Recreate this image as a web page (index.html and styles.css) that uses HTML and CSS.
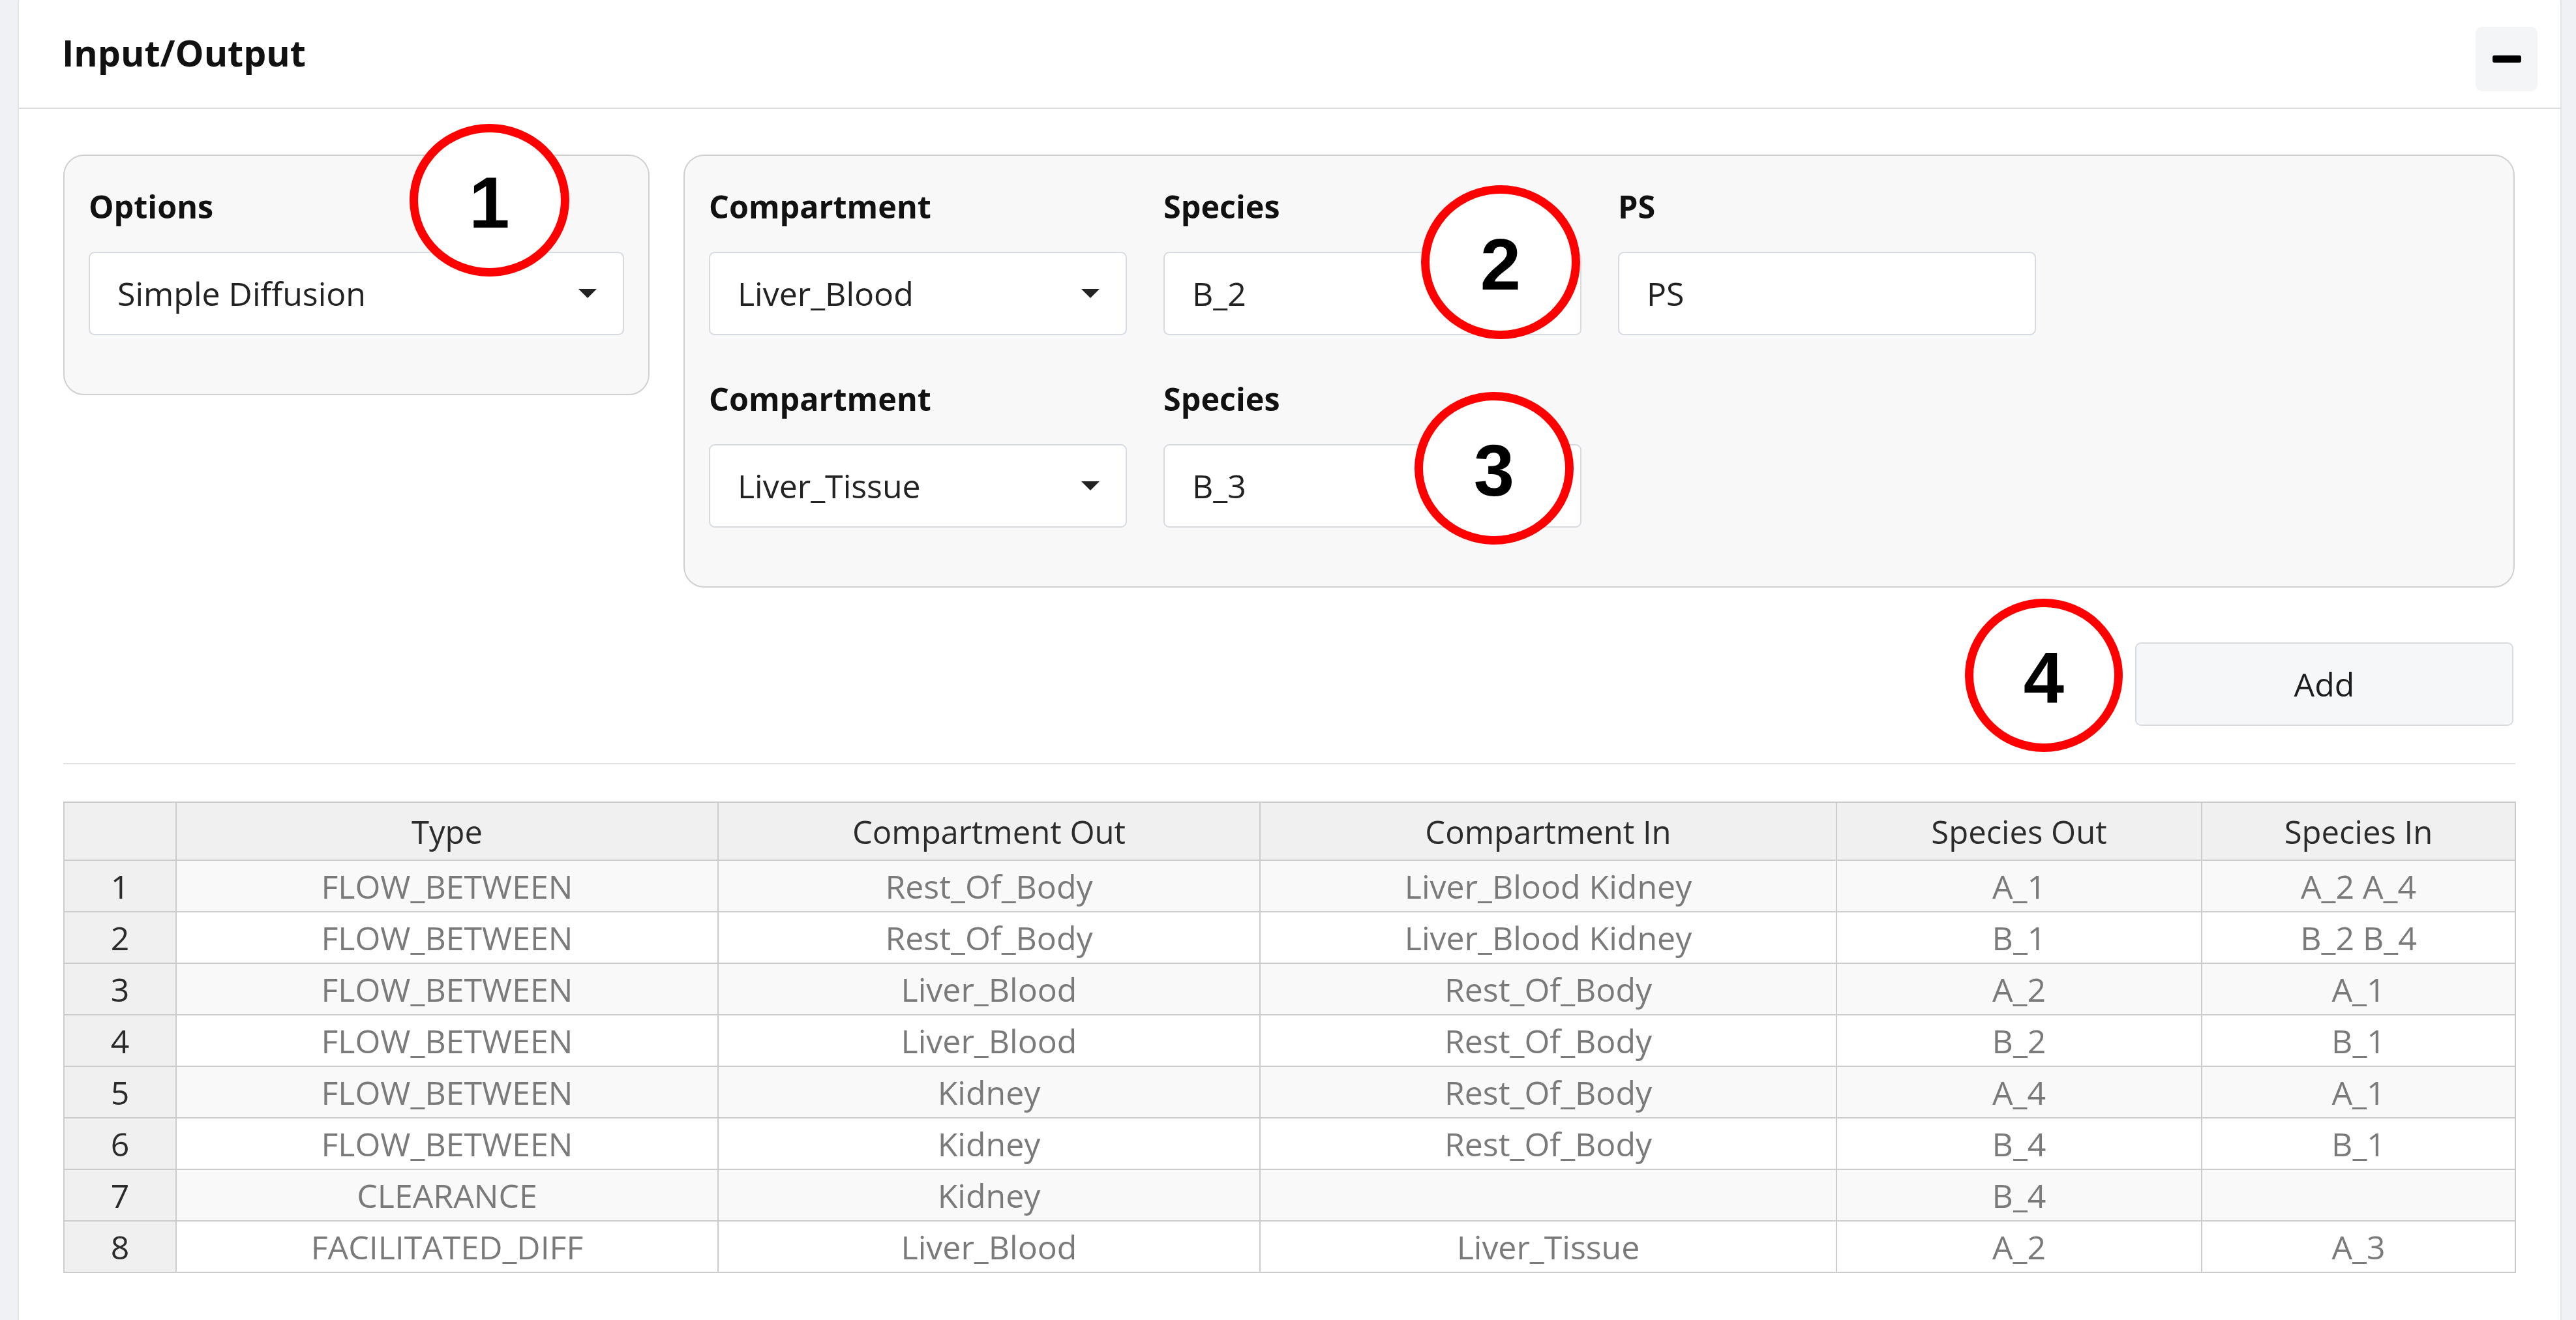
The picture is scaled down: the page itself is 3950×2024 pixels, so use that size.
FILE: index.html
```html
<!DOCTYPE html>
<html lang="en">
<head>
<meta charset="utf-8">
<title>Input/Output</title>
<link rel="stylesheet" href="styles.css">
</head>
<body>
<div class="page">
  <section class="card">
    <header class="card-header">
      <h2 class="card-title">Input/Output</h2>
      <button class="collapse-btn" type="button" aria-label="Collapse"><span class="minus"></span></button>
    </header>
    <div class="card-body">
      <div class="form-row">
        <div class="well well-options">
          <div class="group">
            <label class="label">Options</label>
            <div class="select"><span>Simple Diffusion</span><i class="caret"></i></div>
          </div>
        </div>
        <div class="well well-fields">
          <div class="fields-row">
            <div class="group field">
              <label class="label">Compartment</label>
              <div class="select"><span>Liver_Blood</span><i class="caret"></i></div>
            </div>
            <div class="group field">
              <label class="label">Species</label>
              <div class="input">B_2</div>
            </div>
            <div class="group field">
              <label class="label">PS</label>
              <div class="input">PS</div>
            </div>
          </div>
          <div class="fields-row">
            <div class="group field">
              <label class="label">Compartment</label>
              <div class="select"><span>Liver_Tissue</span><i class="caret"></i></div>
            </div>
            <div class="group field">
              <label class="label">Species</label>
              <div class="input">B_3</div>
            </div>
          </div>
        </div>
      </div>

      <div class="actions">
        <button class="btn-add" type="button">Add</button>
      </div>

      <hr class="divider">

      <table class="grid">
        <thead>
          <tr>
            <th class="idx"></th>
            <th class="c-type">Type</th>
            <th class="c-cout">Compartment Out</th>
            <th class="c-cin">Compartment In</th>
            <th class="c-sout">Species Out</th>
            <th class="c-sin">Species In</th>
          </tr>
        </thead>
        <tbody>
          <tr><th class="idx">1</th><td>FLOW_BETWEEN</td><td>Rest_Of_Body</td><td>Liver_Blood Kidney</td><td>A_1</td><td>A_2 A_4</td></tr>
          <tr><th class="idx">2</th><td>FLOW_BETWEEN</td><td>Rest_Of_Body</td><td>Liver_Blood Kidney</td><td>B_1</td><td>B_2 B_4</td></tr>
          <tr><th class="idx">3</th><td>FLOW_BETWEEN</td><td>Liver_Blood</td><td>Rest_Of_Body</td><td>A_2</td><td>A_1</td></tr>
          <tr><th class="idx">4</th><td>FLOW_BETWEEN</td><td>Liver_Blood</td><td>Rest_Of_Body</td><td>B_2</td><td>B_1</td></tr>
          <tr><th class="idx">5</th><td>FLOW_BETWEEN</td><td>Kidney</td><td>Rest_Of_Body</td><td>A_4</td><td>A_1</td></tr>
          <tr><th class="idx">6</th><td>FLOW_BETWEEN</td><td>Kidney</td><td>Rest_Of_Body</td><td>B_4</td><td>B_1</td></tr>
          <tr><th class="idx">7</th><td>CLEARANCE</td><td>Kidney</td><td></td><td>B_4</td><td></td></tr>
          <tr><th class="idx">8</th><td>FACILITATED_DIFF</td><td>Liver_Blood</td><td>Liver_Tissue</td><td>A_2</td><td>A_3</td></tr>
        </tbody>
      </table>
    </div>
  </section>

  <div class="annot a1">1</div>
  <div class="annot a2">2</div>
  <div class="annot a3">3</div>
  <div class="annot a4">4</div>
</div>
</body>
</html>
```

FILE: styles.css
```css
html, body {
  margin: 0;
  padding: 0;
  height: 2024px;
  overflow: hidden;
  background: #eff1f5;
}

.page {
  position: relative;
  height: 2024px;
  font-family: "Open Sans", "Noto Sans", "Liberation Sans", sans-serif;
  color: #1d1d1d;
}

.card {
  box-sizing: border-box;
  margin-left: 27px;
  margin-top: -12px;
  width: 3901px;
  height: 2200px;
  background: #ffffff;
  border: 2px solid #e0e3e7;
  border-radius: 16px;
}

.card-header {
  box-sizing: content-box;
  display: flex;
  justify-content: space-between;
  align-items: flex-start;
  height: 175px;
  padding: 0 35px 0 66px;
  border-bottom: 2px solid #dedede;
}

.card-title {
  margin: 56px 0 0 0;
  font-size: 55.5px;
  line-height: 70px;
  font-weight: 700;
  color: #111;
}

.collapse-btn {
  margin-top: 51px;
  width: 95px;
  height: 99px;
  border: 0;
  border-radius: 10px;
  background: #f4f5f7;
  display: flex;
  align-items: center;
  justify-content: center;
  padding: 0;
}

.minus {
  display: block;
  width: 44px;
  height: 11px;
  border-radius: 3px;
  background: #000;
}

.card-body {
  padding: 70px 69px 0 68px;
}

.form-row {
  display: flex;
  align-items: flex-start;
  gap: 52px;
}

.well {
  box-sizing: border-box;
  background: #f8f8f8;
  border: 2px solid #d0d0d0;
  border-radius: 32px;
  padding: 47px 37px 23px 37px;
}

.well-options {
  width: 899px;
}

.well-fields {
  width: 2808px;
}

.fields-row {
  display: flex;
  gap: 56px;
}

.field {
  width: 641px;
}

.group {
  margin-bottom: 67px;
}

.label {
  display: block;
  font-size: 48.5px;
  line-height: 60px;
  font-weight: 700;
  color: #111;
  margin-bottom: 40px;
}

.select,
.input {
  box-sizing: border-box;
  height: 128px;
  background: #ffffff;
  border: 2px solid #d6dbe2;
  border-radius: 9px;
  display: flex;
  align-items: center;
  justify-content: space-between;
  padding: 0 40px 0 42px;
  font-size: 50px;
  color: #222;
}

.caret {
  display: block;
  width: 0;
  height: 0;
  border-left: 14px solid transparent;
  border-right: 14px solid transparent;
  border-top: 14px solid #222;
}

.actions {
  display: flex;
  justify-content: flex-end;
  margin-top: 84px;
  padding-right: 3px;
}

.btn-add {
  box-sizing: border-box;
  width: 580px;
  height: 128px;
  background: #f6f7f9;
  border: 2px solid #d6dbe2;
  border-radius: 9px;
  font-family: "Open Sans", "Noto Sans", sans-serif;
  font-size: 50px;
  color: #1d1d1d;
}

.divider {
  border: 0;
  border-top: 2px solid #e3e3e3;
  margin: 57px 0 0 0;
}

.grid {
  margin-top: 57px;
  width: 3759px;
  border-collapse: collapse;
  table-layout: fixed;
  font-size: 50px;
}

.grid th,
.grid td {
  border: 2px solid #cccccc;
  text-align: center;
  padding: 0;
  white-space: nowrap;
  overflow: hidden;
}

.grid thead th {
  height: 87px;
  background: #f0f0f0;
  font-weight: 400;
  font-size: 49px;
  color: #2b2b2b;
}

.grid tbody tr {
  height: 79px;
}

.grid tbody td {
  color: #7a7a7a;
  background: #ffffff;
}

.grid tbody tr:nth-child(odd) td {
  background: #f9f9f9;
}

.grid tbody th.idx {
  background: #f0f0f0;
  font-weight: 400;
  color: #2b2b2b;
}

.idx { width: 170px; }
.c-type { width: 829px; }
.c-cout { width: 829px; }
.c-cin { width: 882px; }
.c-sout { width: 558px; }
.c-sin { width: 479px; }

.annot {
  position: absolute;
  box-sizing: border-box;
  border: 13px solid #ff0000;
  border-radius: 50%;
  background: #ffffff;
  display: flex;
  align-items: center;
  justify-content: center;
  font-family: "Liberation Sans", Arial, sans-serif;
  font-weight: 700;
  font-size: 112px;
  line-height: 1;
  color: #000;
  padding-top: 8px;
}

.a1 { left: 628px; top: 202px; width: 245px; height: 234px; }
.a2 { left: 2179px; top: 296px; width: 244px; height: 236px; }
.a3 { left: 2169px; top: 613px; width: 244px; height: 234px; }
.a4 { left: 3013px; top: 930px; width: 242px; height: 235px; }
```
